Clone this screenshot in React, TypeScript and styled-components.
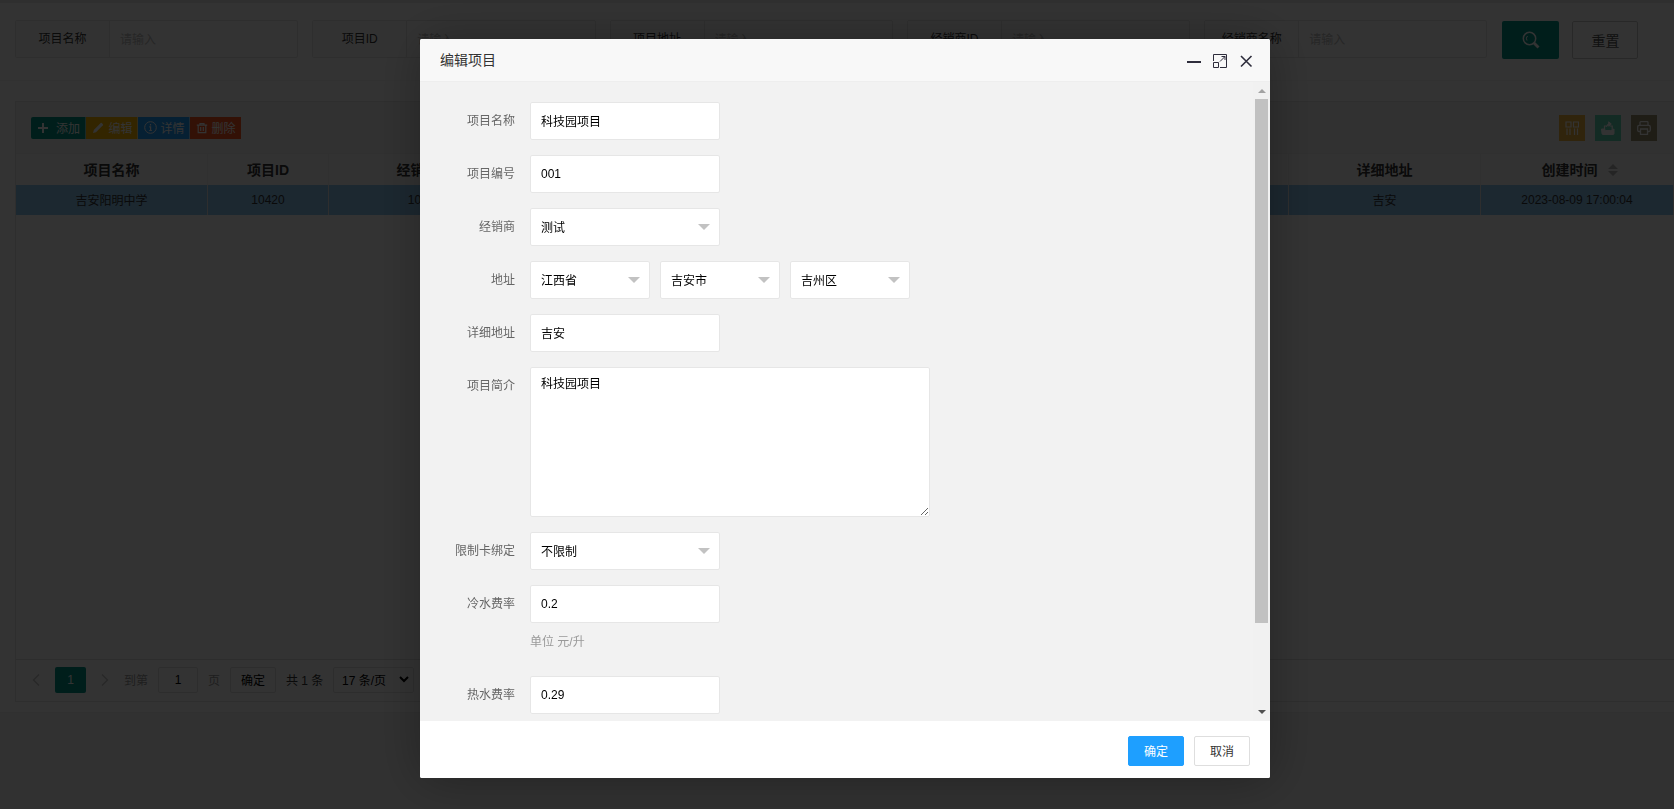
import React from 'react';
import styled, { createGlobalStyle, css } from 'styled-components';

const Global = createGlobalStyle`
  * { box-sizing: border-box; }
  html, body { margin: 0; padding: 0; height: 809px; overflow: hidden; background: #f2f2f2; }
  body, input, button, textarea {
    font-family: "Liberation Sans", "Noto Sans CJK SC", sans-serif;
    font-size: 12px;
  }
`;

const Page = styled.div`
  height: 809px;
  overflow: hidden;
  border-top: 3px solid #eaeaea;
  color: #333;
`;
const Card = styled.div`
  height: 710px;
  background: #fff;
  border-bottom: 1px solid #eee;
`;
const SearchBar = styled.div`
  display: flex;
  align-items: flex-start;
  height: 78px;
  padding: 17px 0 0 15px;
  border-bottom: 1px solid #f6f6f6;
`;
const SearchGroup = styled.div`
  display: flex;
  flex: none;
  width: 283.3px;
  height: 38px;
  margin-right: 14px;
  border: 1px solid #e6e6e6;
  border-radius: 2px;
`;
const SearchLabel = styled.div`
  width: 94px;
  flex: none;
  border-right: 1px solid #e6e6e6;
  background: #fbfbfb;
  text-align: center;
  line-height: 37px;
`;
const SearchInput = styled.input`
  flex: 1;
  min-width: 0;
  border: 0;
  padding: 1px 10px 0;
  outline: 0;
  background: transparent;
  &::placeholder { color: #bdbdbd; opacity: 1; }
`;
const SearchButton = styled.button<{ $primary?: boolean }>`
  display: flex;
  align-items: center;
  justify-content: center;
  flex: none;
  width: ${p => (p.$primary ? 57 : 66)}px;
  height: 38px;
  margin: ${p => (p.$primary ? '1px 13px 0 1px' : '1px 0 0')};
  padding: 0;
  border-radius: 2px;
  border: ${p => (p.$primary ? '0' : '1px solid #c9c9c9')};
  background: ${p => (p.$primary ? '#009688' : '#fff')};
  color: ${p => (p.$primary ? '#fff' : '#555')};
  font-size: 14px;
`;
const TableBox = styled.div`
  display: flex;
  flex-direction: column;
  width: 1700px;
  height: 601px;
  margin: 20px 0 0 15px;
  border: 1px solid #e6e6e6;
`;
const Toolbar = styled.div`
  display: flex;
  justify-content: space-between;
  height: 52px;
  padding: 13px 57px 0 15px;
  background: #f2f2f2;
  border-bottom: 1px solid #eee;
`;
const ActionGroup = styled.div`
  display: flex;
  padding-top: 2px;
`;
const Action = styled.button<{ $bg: string; $w: number; $gap?: number }>`
  display: flex;
  align-items: center;
  width: ${p => p.$w}px;
  height: 22px;
  padding: 0 0 1px 6px;
  gap: ${p => p.$gap ?? 4}px;
  border: 0;
  border-right: 1px solid rgba(255, 255, 255, 0.5);
  background: ${p => p.$bg};
  color: #fff;
  white-space: nowrap;
  svg { flex: none; }
  &:first-child { border-radius: 2px 0 0 2px; }
  &:last-child { border-right: 0; }
`;
const ActionText = styled.span`
  padding-bottom: 1px;
`;
const ToolGroup = styled.div`
  display: flex;
  gap: 10px;
`;
const Tool = styled.div<{ $bg: string }>`
  display: flex;
  align-items: center;
  justify-content: center;
  width: 26px;
  height: 26px;
  background: ${p => p.$bg};
`;
const Row = styled.div<{ $head?: boolean }>`
  display: flex;
  flex: none;
  height: ${p => (p.$head ? 31 : 30)}px;
  background: ${p => (p.$head ? '#fafafa' : '#8cc5ee')};
  ${p => p.$head && css`
    font-size: 14px;
    font-weight: 700;
    color: #333;
  `}
`;
const Cell = styled.div<{ $w: number; $head?: boolean; $sort?: boolean }>`
  display: flex;
  align-items: center;
  justify-content: center;
  gap: 10px;
  flex: none;
  width: ${p => p.$w}px;
  padding: 0 0 ${p => (p.$head ? 2 : 1)}px ${p => (p.$sort ? 5 : 0)}px;
  border-right: 1px solid ${p => (p.$head ? '#f0f0f0' : '#e6e6e6')};
  svg { margin-top: 3px; }
`;
const TableBody = styled.div`
  flex: 1;
`;
const Pager = styled.div`
  display: flex;
  align-items: center;
  height: 42px;
  padding: 0 0 2px 15px;
  border-top: 1px solid #e0e0e0;
`;
const PagerArrow = styled.div<{ $m: string }>`
  display: flex;
  width: 8px;
  margin: ${p => p.$m};
`;
const PageNow = styled.div`
  width: 31px;
  height: 26px;
  border-radius: 2px;
  background: #009688;
  color: #fff;
  text-align: center;
  line-height: 26px;
`;
const PagerText = styled.span<{ $w: number; $dark?: boolean }>`
  width: ${p => p.$w}px;
  margin-right: 10px;
  color: ${p => (p.$dark ? '#333' : '#999')};
  white-space: nowrap;
`;
const PagerBox = styled.div<{ $w: number; $select?: boolean }>`
  display: flex;
  align-items: center;
  justify-content: ${p => (p.$select ? 'space-between' : 'center')};
  width: ${p => p.$w}px;
  height: 26px;
  margin-right: 10px;
  padding: ${p => (p.$select ? '0 4px 0 8px' : '0')};
  border: 1px solid #e2e2e2;
  border-radius: 2px;
  color: #000;
  white-space: nowrap;
`;

const Shade = styled.div`
  position: fixed;
  inset: 0;
  background: rgba(0, 0, 0, 0.8);
`;
const Modal = styled.div`
  position: fixed;
  left: 420px;
  top: 39px;
  display: flex;
  flex-direction: column;
  width: 850px;
  height: 739px;
  overflow: hidden;
  border-radius: 2px;
  background: #fff;
  box-shadow: 1px 1px 50px rgba(0, 0, 0, 0.3);
`;
const ModalTitle = styled.div`
  display: flex;
  align-items: center;
  justify-content: space-between;
  flex: none;
  height: 43px;
  padding: 0 17px 0 20px;
  border-bottom: 1px solid #eee;
  background: #f8f8f8;
  color: #333;
  font-size: 14px;
`;
const TitleText = styled.span`
  padding-bottom: 2px;
`;
const WindowControls = styled.div`
  display: flex;
  align-items: center;
  padding-top: 2px;
`;
const ModalBody = styled.div`
  display: flex;
  justify-content: space-between;
  flex: none;
  height: 639px;
  overflow: hidden;
  background: #f2f2f2;
`;
const Form = styled.div`
  display: flex;
  flex-direction: column;
  gap: 15px;
  padding: 20px 0 0;
`;
const FormRow = styled.div`
  display: flex;
  flex: none;
  gap: 10px;
`;
const Label = styled.label`
  width: 100px;
  padding-right: 5px;
  color: #666;
  text-align: right;
  line-height: 38px;
  height: 38px;
`;
const inputLook = css`
  border: 1px solid #e6e6e6;
  border-radius: 2px;
  background: #fff;
  color: #000;
`;
const Input = styled.input<{ $cjk?: boolean }>`
  ${inputLook}
  width: 190px;
  height: 38px;
  padding: 0 0 ${p => (p.$cjk ? 2 : 0)}px 10px;
  outline: 0;
`;
const Select = styled.div<{ $w?: number }>`
  ${inputLook}
  display: flex;
  align-items: center;
  justify-content: space-between;
  width: ${p => p.$w ?? 190}px;
  height: 38px;
  padding: 0 9px 0 10px;
`;
const SelectText = styled.span`
  padding-bottom: 2px;
`;
const Caret = styled.i`
  border: 6px solid transparent;
  border-top-color: #c2c2c2;
  border-bottom: 0;
`;
const TextArea = styled.textarea`
  ${inputLook}
  display: block;
  width: 400px;
  height: 150px;
  padding: 6px 10px;
  line-height: 20px;
  outline: 0;
  resize: both;
`;
const Hint = styled.div`
  height: 38px;
  padding-top: 9px;
  color: #999;
  line-height: 20px;
`;
const Stack = styled.div``;
const ScrollTrack = styled.div`
  display: flex;
  flex-direction: column;
  align-items: center;
  width: 17px;
  padding: 7px 2px 7px 2px;
  background: #f1f1f1;
`;
const ScrollArrow = styled.i<{ $down?: boolean }>`
  border: 4px solid transparent;
  ${p => (p.$down
    ? css`border-top-color: #505050; border-bottom: 0; margin-top: auto;`
    : css`border-bottom-color: #a3a3a3; border-top: 0;`)}
`;
const ScrollThumb = styled.div`
  width: 13px;
  height: 524px;
  margin-top: 6px;
  background: #c1c1c1;
`;
const Footer = styled.div`
  display: flex;
  justify-content: flex-end;
  gap: 10px;
  height: 57px;
  padding: 15px 20px 0 0;
  background: #fff;
`;
const FooterButton = styled.button<{ $primary?: boolean }>`
  width: 56px;
  height: 30px;
  padding: 0 0 2px;
  border: 1px solid ${p => (p.$primary ? '#1e9fff' : '#dedede')};
  border-radius: 2px;
  background: ${p => (p.$primary ? '#1e9fff' : '#fff')};
  color: ${p => (p.$primary ? '#fff' : '#333')};
`;

const PlusIcon = () => (
  <svg width="12" height="12" viewBox="0 0 12 12" stroke="#fff" strokeWidth="2" fill="none"><path d="M6 1v10M1 6h10" /></svg>
);
const PencilIcon = () => (
  <svg width="12" height="12" viewBox="0 0 12 12" fill="#fff"><path d="M1 11l.8-3L8.700 1.100a.8.8 0 0 1 1.100 0l1.100 1.100a.8.8 0 0 1 0 1.100L4 10.200z" /></svg>
);
const InfoIcon = () => (
  <svg width="13" height="13" viewBox="0 0 13 13" fill="none" stroke="#fff"><circle cx="6.5" cy="6.5" r="5.8" /><path d="M6.500 3v1.400M5.300 5.900h1.300v3.500M5.200 9.500h2.700" strokeWidth="1.200" /></svg>
);
const TrashIcon = () => (
  <svg width="12" height="12" viewBox="0 0 12 12" fill="none" stroke="#fff"><path d="M.8 3.200h10.400M4 3V1.700h4V3M2.200 3.200v7.500h7.600V3.200M4.700 5v4M7.300 5v4" strokeWidth="1.200" /></svg>
);
const SearchIcon = () => (
  <svg width="18" height="18" viewBox="0 0 18 18" fill="none" stroke="#fff"><circle cx="7.5" cy="7.5" r="6.2" strokeWidth="1.500" /><path d="M12 12l4.500 4.500" strokeWidth="2.800" /><path d="M5 9.500a3.500 3.500 0 0 1 .5-4.500" /></svg>
);
const ColumnsIcon = () => (
  <svg width="14" height="14" viewBox="0 0 14 14" fill="none" stroke="#fff"><path d="M1 1h5v5H1zM8.500 1h5v5h-5zM2 7.500V14M5 7.500V14M9.500 7.500V14M12.500 7.500V14" strokeWidth="1.200" /></svg>
);
const ExportIcon = () => (
  <svg width="14" height="14" viewBox="0 0 14 14" fill="none" stroke="#fff">
    <path d="M.5 8h3l1 1.500h5L13 8v4.500q0 1-1 1H2q-1 0-1-1z" fill="#fff" />
    <path d="M3.500 8V5h2M8.500 5h2.700v3" strokeWidth="1.200" />
    <path d="M5.500 6q0-3 3-3M7.700.8L10.300 3 7.700 5.200z" fill="#fff" />
  </svg>
);
const PrintIcon = () => (
  <svg width="14" height="14" viewBox="0 0 14 14" fill="none" stroke="#fff" strokeWidth="1.300"><path d="M3 4V1.500Q3 .7 3.800.7h6.400q.8 0 .8.800V4M3.500 10.500H2Q.7 10.500.7 9V6Q.7 4.300 2.200 4.300h9.600q1.500 0 1.500 1.700v3q0 1.500-1.300 1.500h-1.500M3.500 8h7v5.300h-7z" /></svg>
);
const SortIcon = () => (
  <svg width="10" height="12" viewBox="0 0 10 12" fill="#b2b2b2"><path d="M0 5l5-5 5 5zM0 7l5 5 5-5z" /></svg>
);
const Chevron = ({ d }: { d: string }) => (
  <svg width="8" height="12" viewBox="0 0 8 12" fill="none" stroke="#c2c2c2" strokeWidth="1.300"><path d={d} /></svg>
);

const searchLabels = ['项目名称', '项目ID', '项目地址', '经销商ID', '经销商名称'];

export default function App() {
  return (
    <>
      <Global />
      <Page>
        <Card>
          <SearchBar>
            {searchLabels.map(l => (
              <SearchGroup key={l}>
                <SearchLabel>{l}</SearchLabel>
                <SearchInput placeholder="请输入" />
              </SearchGroup>
            ))}
            <SearchButton $primary><SearchIcon /></SearchButton>
            <SearchButton>重置</SearchButton>
          </SearchBar>
          <TableBox>
            <Toolbar>
              <ActionGroup>
                <Action $bg="#009688" $w={54.5} $gap={7}><PlusIcon /><ActionText>添加</ActionText></Action>
                <Action $bg="#FFB800" $w={52} $gap={5}><PencilIcon /><ActionText>编辑</ActionText></Action>
                <Action $bg="#1E9FFF" $w={52}><InfoIcon /><ActionText>详情</ActionText></Action>
                <Action $bg="#FF5722" $w={51.5}><TrashIcon /><ActionText>删除</ActionText></Action>
              </ActionGroup>
              <ToolGroup>
                <Tool $bg="#f0b43c"><ColumnsIcon /></Tool>
                <Tool $bg="#5fd6b4"><ExportIcon /></Tool>
                <Tool $bg="#9c8f6e"><PrintIcon /></Tool>
              </ToolGroup>
            </Toolbar>
            <Row $head>
              <Cell $head $w={192}>项目名称</Cell>
              <Cell $head $w={121}>项目ID</Cell>
              <Cell $head $w={192}>经销商ID</Cell>
              <Cell $head $w={768} />
              <Cell $head $w={192}>详细地址</Cell>
              <Cell $head $sort $w={193}>创建时间<SortIcon /></Cell>
            </Row>
            <Row>
              <Cell $w={192}>吉安阳明中学</Cell>
              <Cell $w={121}>10420</Cell>
              <Cell $w={192}>10420</Cell>
              <Cell $w={768} />
              <Cell $w={192}>吉安</Cell>
              <Cell $w={193}>2023-08-09 17:00:04</Cell>
            </Row>
            <TableBody />
            <Pager>
              <PagerArrow $m="0 15px 0 1px"><Chevron d="M7 .5L1.500 6 7 11.500" /></PagerArrow>
              <PageNow>1</PageNow>
              <PagerArrow $m="0 15px 0 15px"><Chevron d="M1 .5L6.500 6 1 11.500" /></PagerArrow>
              <PagerText $w={24}>到第</PagerText>
              <PagerBox $w={40}>1</PagerBox>
              <PagerText $w={12}>页</PagerText>
              <PagerBox $w={46}>确定</PagerBox>
              <PagerText $w={37} $dark>共 1 条</PagerText>
              <PagerBox $w={81} $select>
                17 条/页
                <svg width="10" height="7" viewBox="0 0 10 7" fill="none" stroke="#000" strokeWidth="2"><path d="M1 1l4 4 4-4" /></svg>
              </PagerBox>
            </Pager>
          </TableBox>
        </Card>
      </Page>
      <Shade />
      <Modal>
        <ModalTitle>
          <TitleText>编辑项目</TitleText>
          <WindowControls>
            <svg width="66" height="16" viewBox="0 0 66 16" fill="none" stroke="#2e2d3c">
              <path d="M0 9h14" strokeWidth="2" />
              <path d="M26.500 8V1.500h13v13H33M26.500 9.500h5v5h-5zM33 8.500l5-5M34.500 3.500H38V7" />
              <path d="M54 3l10.500 10.500M64.500 3L54 13.500" strokeWidth="1.600" />
            </svg>
          </WindowControls>
        </ModalTitle>
        <ModalBody>
          <Form>
            <FormRow><Label>项目名称</Label><Input $cjk defaultValue="科技园项目" /></FormRow>
            <FormRow><Label>项目编号</Label><Input defaultValue="001" /></FormRow>
            <FormRow><Label>经销商</Label><Select><SelectText>测试</SelectText><Caret /></Select></FormRow>
            <FormRow>
              <Label>地址</Label>
              <Select $w={120}><SelectText>江西省</SelectText><Caret /></Select>
              <Select $w={120}><SelectText>吉安市</SelectText><Caret /></Select>
              <Select $w={120}><SelectText>吉州区</SelectText><Caret /></Select>
            </FormRow>
            <FormRow><Label>详细地址</Label><Input $cjk defaultValue="吉安" /></FormRow>
            <FormRow><Label>项目简介</Label><TextArea defaultValue="科技园项目" /></FormRow>
            <FormRow><Label>限制卡绑定</Label><Select><SelectText>不限制</SelectText><Caret /></Select></FormRow>
            <FormRow>
              <Label>冷水费率</Label>
              <Stack><Input defaultValue="0.2" /><Hint>单位 元/升</Hint></Stack>
            </FormRow>
            <FormRow><Label>热水费率</Label><Input defaultValue="0.29" /></FormRow>
          </Form>
          <ScrollTrack><ScrollArrow /><ScrollThumb /><ScrollArrow $down /></ScrollTrack>
        </ModalBody>
        <Footer>
          <FooterButton $primary>确定</FooterButton>
          <FooterButton>取消</FooterButton>
        </Footer>
      </Modal>
    </>
  );
}
